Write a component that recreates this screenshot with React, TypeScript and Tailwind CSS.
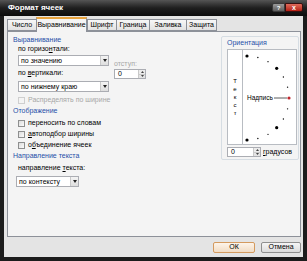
const FONT = { fontFamily: '"Liberation Sans", Arial, sans-serif' };

const tabs = [
  { label: "Число", w: "w-[29px]" },
  { label: "Выравнивание", w: "w-[51px]", active: true },
  { label: "Шрифт", w: "w-[29px]" },
  { label: "Граница", w: "w-[33px]" },
  { label: "Заливка", w: "w-[37px]" },
  { label: "Защита", w: "w-[31px]" },
];

function DropButton() {
  return (
    <div className="w-[8px] h-full border-l border-[#c9c9c9] bg-gradient-to-b from-[#f4f4f4] to-[#dedede] flex items-center justify-center">
      <svg width="4" height="3" viewBox="0 0 4 3">
        <path d="M0 0H4L2 3Z" fill="#222" />
      </svg>
    </div>
  );
}

function Select({ value, w }: { value: string; w: string }) {
  return (
    <div className={`${w} h-[11px] border border-[#abadb3] bg-white flex items-stretch`}>
      <span className="flex-1 pl-[2px] leading-[9px] text-[7px] text-black">{value}</span>
      <DropButton />
    </div>
  );
}

function Spinner({ w }: { w: string }) {
  return (
    <div className={`${w} h-[10px] border border-[#abadb3] bg-white flex items-stretch`}>
      <span className="flex-1 pl-[3px] leading-[8px] text-[7px] text-black">0</span>
      <div className="w-[7px] flex flex-col border-l border-[#c9c9c9]">
        <div className="flex-1 bg-[#ececec] border-b border-[#c9c9c9] flex items-center justify-center">
          <svg width="3" height="2" viewBox="0 0 3 2">
            <path d="M0 2H3L1.5 0Z" fill="#444" />
          </svg>
        </div>
        <div className="flex-1 bg-[#e4e4e4] flex items-center justify-center">
          <svg width="3" height="2" viewBox="0 0 3 2">
            <path d="M0 0H3L1.5 2Z" fill="#444" />
          </svg>
        </div>
      </div>
    </div>
  );
}

function Check({ children, disabled }: { children: React.ReactNode; disabled?: boolean }) {
  return (
    <div className="h-[8px] flex items-center gap-[3px] pl-[5px]">
      <div
        className={`w-[7px] h-[7px] border ${
          disabled ? "border-[#cfcfcf] bg-[#f4f4f4]" : "border-[#8e8f8f] bg-gradient-to-br from-[#dcdcdc] to-[#fbfbfb]"
        }`}
      />
      <span className={`text-[7px] leading-[8px] ${disabled ? "text-[#a7a7a7]" : "text-black"}`}>{children}</span>
    </div>
  );
}

function Header({ children }: { children: React.ReactNode }) {
  return <div className="h-[8px] text-[7px] leading-[8px] text-[#1f4fa8]">{children}</div>;
}

function Dial() {
  const cx = 4;
  const cy = 48;
  const r = 42;
  const dots = [];
  for (let a = -90; a <= 90; a += 15) {
    const rad = (a * Math.PI) / 180;
    const x = cx + r * Math.cos(rad);
    const y = cy - r * Math.sin(rad);
    const big = a % 45 === 0;
    dots.push(
      <circle
        key={a}
        cx={x}
        cy={y}
        r={big ? 1.6 : 0.7}
        fill={a === 0 ? "#c0262d" : "#000"}
      />
    );
  }
  return (
    <svg width="53" height="96" viewBox="0 0 53 96" className="absolute left-0 top-0">
      <line x1="31" y1="48" x2="44" y2="48" stroke="#333" strokeWidth="0.8" />
      {dots}
    </svg>
  );
}

export default function App() {
  return (
    <div className="w-[307px] h-[261px] bg-[#1c1c1c] flex flex-col overflow-hidden" style={FONT}>
      {/* title bar */}
      <div className="h-[16px] shrink-0 flex items-start justify-between pl-[8px] pr-[4px] bg-gradient-to-b from-[#555] via-[#1f1f1f] to-[#0c0c0c]">
        <span className="mt-[3px] text-[8px] leading-[10px] font-bold text-white">Формат ячеек</span>
        <div className="flex mt-[3px]">
          <div className="w-[13px] h-[9px] rounded-l-[2px] border border-[#3a3a3a] bg-gradient-to-b from-[#9a9a9a] to-[#5e5e5e] flex items-center justify-center text-[6px] leading-[6px] font-bold text-white">
            ?
          </div>
          <div className="w-[18px] h-[9px] rounded-r-[2px] border border-[#3a1010] bg-gradient-to-b from-[#e06a5a] to-[#b51a10] flex items-center justify-center text-[7px] leading-[7px] font-bold text-white">
            x
          </div>
        </div>
      </div>

      {/* client area */}
      <div className="flex-1 mx-[4px] mb-[4px] bg-[#e4e4e4] flex flex-col">
        {/* tabs */}
        <div className="h-[15px] shrink-0 flex items-end pl-[3px]">
          {tabs.map((t) =>
            t.active ? (
              <div
                key={t.label}
                className={`${t.w} h-[15px] -mb-px relative z-10 bg-[#f4f4f4] border border-b-0 border-[#8d9199] border-t-[#e8a33c] border-t-2 flex items-center justify-center text-[7px] text-black`}
              >
                {t.label}
              </div>
            ) : (
              <div
                key={t.label}
                className={`${t.w} h-[12px] border border-r-0 border-[#8d9199] last:border-r bg-gradient-to-b from-[#f7f7f7] to-[#e2e2e2] flex items-center justify-center text-[7px] text-black`}
              >
                {t.label}
              </div>
            )
          )}
        </div>

        {/* panel */}
        <div className="h-[206px] shrink-0 ml-[3px] mr-[2px] border border-[#8d9199] bg-[#f4f4f4] flex pl-[5px] pt-[4px] pr-[1px]">
          {/* left column */}
          <div className="w-[205px] flex flex-col">
            <Header>Выравнивание</Header>
            <div className="flex pl-[5px]">
              <div className="flex flex-col">
                <div className="mt-[1px] h-[8px] text-[7px] leading-[8px]">
                  по горизо<span className="underline">н</span>тали:
                </div>
                <div className="mt-[2px]">
                  <Select value="по значению" w="w-[91px]" />
                </div>
                <div className="mt-[3px] h-[8px] text-[7px] leading-[8px]">
                  по <span className="underline">в</span>ертикали:
                </div>
                <div className="mt-[4px]">
                  <Select value="по нижнему краю" w="w-[91px]" />
                </div>
              </div>
              <div className="ml-[5px] flex flex-col">
                <div className="mt-[16px] h-[8px] text-[7px] leading-[8px] text-[#a7a7a7]">отступ:</div>
                <div className="mt-[1px]">
                  <Spinner w="w-[32px]" />
                </div>
              </div>
            </div>
            <div className="mt-[4px]">
              <Check disabled>Распределять по ширине</Check>
            </div>
            <div className="mt-[3px]">
              <Header>Отображение</Header>
            </div>
            <div className="mt-[4px]">
              <Check>переносить по словам</Check>
            </div>
            <div className="mt-[3px]">
              <Check>
                <span className="underline">а</span>втоподбор ширины
              </Check>
            </div>
            <div className="mt-[3px]">
              <Check>
                о<span className="underline">б</span>ъединение ячеек
              </Check>
            </div>
            <div className="mt-[3px]">
              <Header>Направление текста</Header>
            </div>
            <div className="mt-[4px] pl-[5px] h-[8px] text-[7px] leading-[8px]">
              направление <span className="underline">т</span>екста:
            </div>
            <div className="mt-[4px] pl-[3px]">
              <Select value="по контексту" w="w-[63px]" />
            </div>
          </div>

          {/* orientation */}
          <div className="w-[78px] h-[124px] ml-auto border border-[#d6dde3] rounded-[2px] flex flex-col pl-[5px] pr-[1px] pt-[1px]">
            <div className="h-[9px] text-[7px] leading-[9px] text-[#1f4fa8]">Ориентация</div>
            <div className="mt-[2px] h-[96px] border border-[#b8bcc2] bg-white flex">
              <div className="w-[15px] border-r border-[#b8bcc2] flex flex-col items-center justify-center gap-[1px] text-[6px] leading-[7px] text-black">
                <span>Т</span>
                <span>е</span>
                <span>к</span>
                <span>с</span>
                <span>т</span>
              </div>
              <div className="relative flex-1">
                <Dial />
                <span className="absolute left-[4px] top-[44px] text-[6.5px] leading-[8px] text-black">Надпись</span>
              </div>
            </div>
            <div className="mt-[2px] flex items-center gap-[2px]">
              <Spinner w="w-[34px]" />
              <span className="text-[7px] leading-[8px] text-black">
                <span className="underline">г</span>радусов
              </span>
            </div>
          </div>
        </div>

        {/* buttons */}
        <div className="flex-1 flex items-start justify-end gap-[6px] pt-[5px] pr-[2px]">
          <div className="w-[42px] h-[11px] rounded-[2px] border border-[#d49a5e] bg-gradient-to-b from-[#fdf4ea] to-[#f1dcc4] flex items-center justify-center text-[7px] text-black">
            ОК
          </div>
          <div className="w-[40px] h-[11px] rounded-[2px] border border-[#8f8f8f] bg-gradient-to-b from-[#f5f5f5] to-[#dcdcdc] flex items-center justify-center text-[7px] text-black">
            Отмена
          </div>
        </div>
      </div>
    </div>
  );
}
